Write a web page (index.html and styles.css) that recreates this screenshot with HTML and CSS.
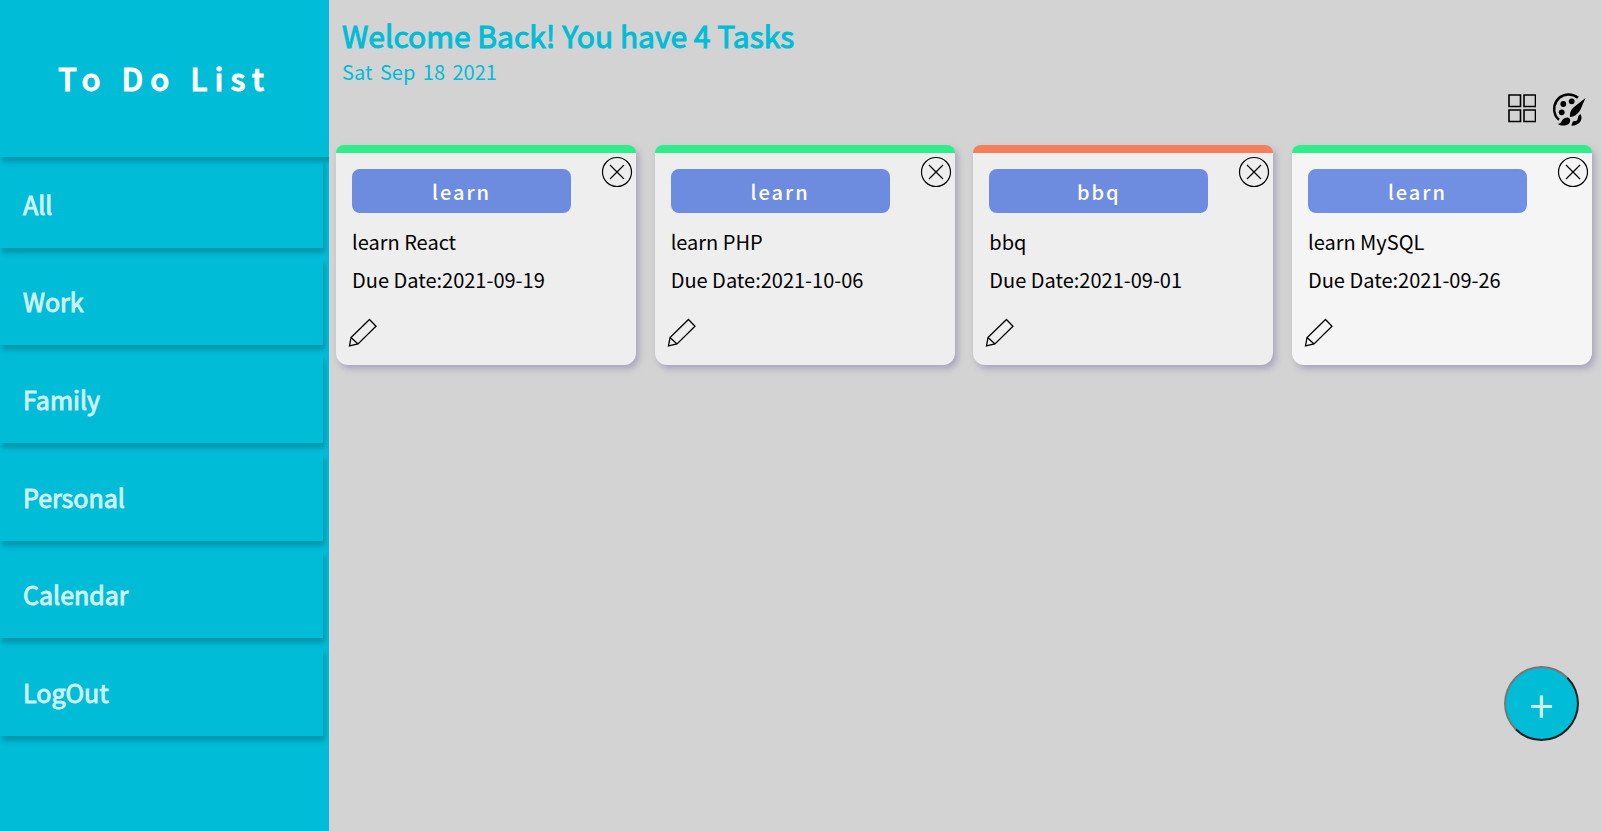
FILE: index.html
```html
<!DOCTYPE html>
<html lang="en">
<head>
<meta charset="utf-8">
<title>To Do List</title>
<link rel="stylesheet" href="styles.css">
</head>
<body>
<svg class="sprite" aria-hidden="true">
  <symbol id="close" viewBox="0 0 32 32">
    <circle cx="16" cy="16" r="14.5"/>
    <path d="M9 9 23 23M23 9 9 23"/>
  </symbol>
  <symbol id="pencil" viewBox="0 0 30 30">
    <path d="M21.5 1.5 28 8.300 10 26 1.500 28 3 19.500ZM3 19.500 10 26"/>
  </symbol>
</svg>
<div class="app">
  <aside class="sidebar">
    <header class="brand"><h1 class="brand-name">To Do List</h1></header>
    <nav class="menu">
      <a class="menu-item" href="#all">All</a>
      <a class="menu-item" href="#work">Work</a>
      <a class="menu-item" href="#family">Family</a>
      <a class="menu-item" href="#personal">Personal</a>
      <a class="menu-item" href="#calendar">Calendar</a>
      <a class="menu-item" href="#logout">LogOut</a>
    </nav>
  </aside>
  <main class="content">
    <header class="intro">
      <h2 class="welcome">Welcome Back! You have 4 Tasks</h2>
      <p class="today">Sat Sep 18 2021</p>
    </header>
    <div class="tools">
      <button class="icon-button" type="button" aria-label="Grid view">
        <svg class="grid-icon" viewBox="0 0 28 30"><path d="M1 1h11.500v11.500H1zM16 1h11.500v11.500H16zM1 16h11.500v11.500H1zM16 16h11.500v11.500H16z"/></svg>
      </button>
      <button class="icon-button" type="button" aria-label="Theme">
        <svg class="palette-icon" viewBox="0 0 34 34">
          <path class="rim" d="M26 5.800C20.500 1.200 12.500 1.300 7.300 5.800 2 10.500 .8 18 3.500 23.500 4.400 25.300 5.500 26.500 7 27.700"/>
          <circle cx="11.300" cy="12" r="2.900"/><circle cx="19.700" cy="9.300" r="2.900"/><circle cx="9.700" cy="20.300" r="2.900"/>
          <path d="M33.500 6 28.500 17.500C26.500 21.500 23 24.500 18 24.900 17.300 21 19 17.500 22 15Z"/>
          <path d="M17.500 26.300C19.500 29.300 17 33.300 12.500 33.600 9.500 33.700 7.500 33 6 32 9.500 31.200 9 29.300 11 27.300 13 25.300 16 24.700 17.500 26.300Z"/>
          <path d="M28.500 22C31.500 27 28 33.500 19.500 33.800 19.500 32.500 20.300 31.500 20.800 29.500 22.300 28.800 23.500 29.500 24.800 28.500 26.500 27 24.800 24.500 28.500 22Z"/>
        </svg>
      </button>
    </div>
    <section class="cards">
      <article class="card">
        <button class="close" type="button" aria-label="Delete task"><svg class="close-icon"><use href="#close"/></svg></button>
        <h3 class="tag">learn</h3>
        <p class="line">learn React</p>
        <p class="line">Due Date:2021-09-19</p>
        <button class="edit" type="button" aria-label="Edit task"><svg class="edit-icon"><use href="#pencil"/></svg></button>
      </article>
      <article class="card">
        <button class="close" type="button" aria-label="Delete task"><svg class="close-icon"><use href="#close"/></svg></button>
        <h3 class="tag">learn</h3>
        <p class="line">learn PHP</p>
        <p class="line">Due Date:2021-10-06</p>
        <button class="edit" type="button" aria-label="Edit task"><svg class="edit-icon"><use href="#pencil"/></svg></button>
      </article>
      <article class="card overdue">
        <button class="close" type="button" aria-label="Delete task"><svg class="close-icon"><use href="#close"/></svg></button>
        <h3 class="tag">bbq</h3>
        <p class="line">bbq</p>
        <p class="line">Due Date:2021-09-01</p>
        <button class="edit" type="button" aria-label="Edit task"><svg class="edit-icon"><use href="#pencil"/></svg></button>
      </article>
      <article class="card active">
        <button class="close" type="button" aria-label="Delete task"><svg class="close-icon"><use href="#close"/></svg></button>
        <h3 class="tag">learn</h3>
        <p class="line">learn MySQL</p>
        <p class="line">Due Date:2021-09-26</p>
        <button class="edit" type="button" aria-label="Edit task"><svg class="edit-icon"><use href="#pencil"/></svg></button>
      </article>
    </section>
    <button class="add" type="button" aria-label="Add task">+</button>
  </main>
</div>
</body>
</html>
```
FILE: styles.css
```css
* { box-sizing: border-box; }
body {
  margin: 0;
  background: #d3d3d3;
  color: #000;
  font-family: "Noto Sans CJK SC", sans-serif;
}
h1, h2, h3, p { margin: 0; }
button { font-family: inherit; cursor: pointer; }
.sprite { position: absolute; width: 0; height: 0; }
.app { display: flex; min-height: 100vh; }

.sidebar {
  flex: 0 0 329px;
  display: flex;
  flex-direction: column;
  overflow: hidden;
  background: #00bcd7;
}
.brand {
  display: flex;
  align-items: center;
  justify-content: center;
  height: 157px;
  padding-bottom: 2px;
  box-shadow: 2px 5px 5px rgba(0, 0, 0, 0.2);
}
.brand-name {
  color: #fff;
  font-size: 31px;
  font-weight: 500;
  letter-spacing: 7px;
  line-height: 44px;
  -webkit-text-stroke: 1px #fff;
}
.menu {
  flex: 1;
  display: grid;
  grid-auto-rows: 1fr;
  gap: 10px;
  margin: 3px 6px 95px 0;
}
.menu-item {
  display: flex;
  align-items: center;
  padding-left: 23px;
  color: #ccf2f7;
  font-size: 25px;
  -webkit-text-stroke: 1px #ccf2f7;
  text-decoration: none;
  box-shadow: 2px 5px 5px rgba(0, 0, 0, 0.2);
}

.content { flex: 1; min-width: 0; }
.intro { padding: 13px 13px 0; color: #00bcd7; }
.welcome {
  font-size: 30px;
  font-weight: 400;
  line-height: 44px;
  -webkit-text-stroke: 1px #00bcd7;
}
.today { font-size: 20px; line-height: 30px; word-spacing: 3px; }
.tools {
  display: flex;
  justify-content: flex-end;
  align-items: center;
  gap: 16px;
  height: 44px;
  padding-right: 15px;
}
.icon-button, .close, .edit {
  display: flex;
  padding: 0;
  border: 0;
  background: none;
}
.grid-icon { width: 28px; height: 30px; fill: none; stroke: #000; stroke-width: 1.6; }
.palette-icon { width: 34px; height: 34px; }
.rim { fill: none; stroke: #000; stroke-width: 2.5; }

.cards {
  display: flex;
  flex-wrap: wrap;
  justify-content: space-between;
  gap: 18px;
  margin-top: 14px;
  padding: 0 9px 0 7px;
}
.card {
  position: relative;
  width: 300px;
  height: 220px;
  padding: 16px;
  border-top: 8px solid #2eee8c;
  border-radius: 8px 8px 12px 12px;
  background: #eee;
  box-shadow: 3px 4px 6px rgba(120, 110, 160, 0.45);
}
.overdue { border-top-color: #f67f5b; }
.active { background: #f5f5f5; }
.tag {
  width: 219px;
  height: 44px;
  margin-bottom: 10px;
  border-radius: 8px;
  background: #6e8cdf;
  color: #fff;
  font-size: 20px;
  font-weight: 500;
  line-height: 46px;
  letter-spacing: 2px;
  text-align: center;
}
.active .tag { background: #7190e3; }
.line { font-size: 20px; line-height: 38px; }
.close { position: absolute; top: 3px; right: 3px; }
.close-icon { width: 32px; height: 32px; fill: none; stroke: #000; stroke-width: 1.2; }
.edit { margin: 19px 0 0 -4px; }
.edit-icon { width: 30px; height: 30px; fill: none; stroke: #000; stroke-width: 1.3; }

.add {
  position: fixed;
  right: 22px;
  bottom: 90px;
  width: 75px;
  height: 75px;
  padding: 0;
  border: 2px solid;
  border-color: #767676 #212121 #212121 #767676;
  border-radius: 50%;
  background: #00bcd7;
  color: rgba(255, 255, 255, 0.8);
  font-size: 44px;
}
```
